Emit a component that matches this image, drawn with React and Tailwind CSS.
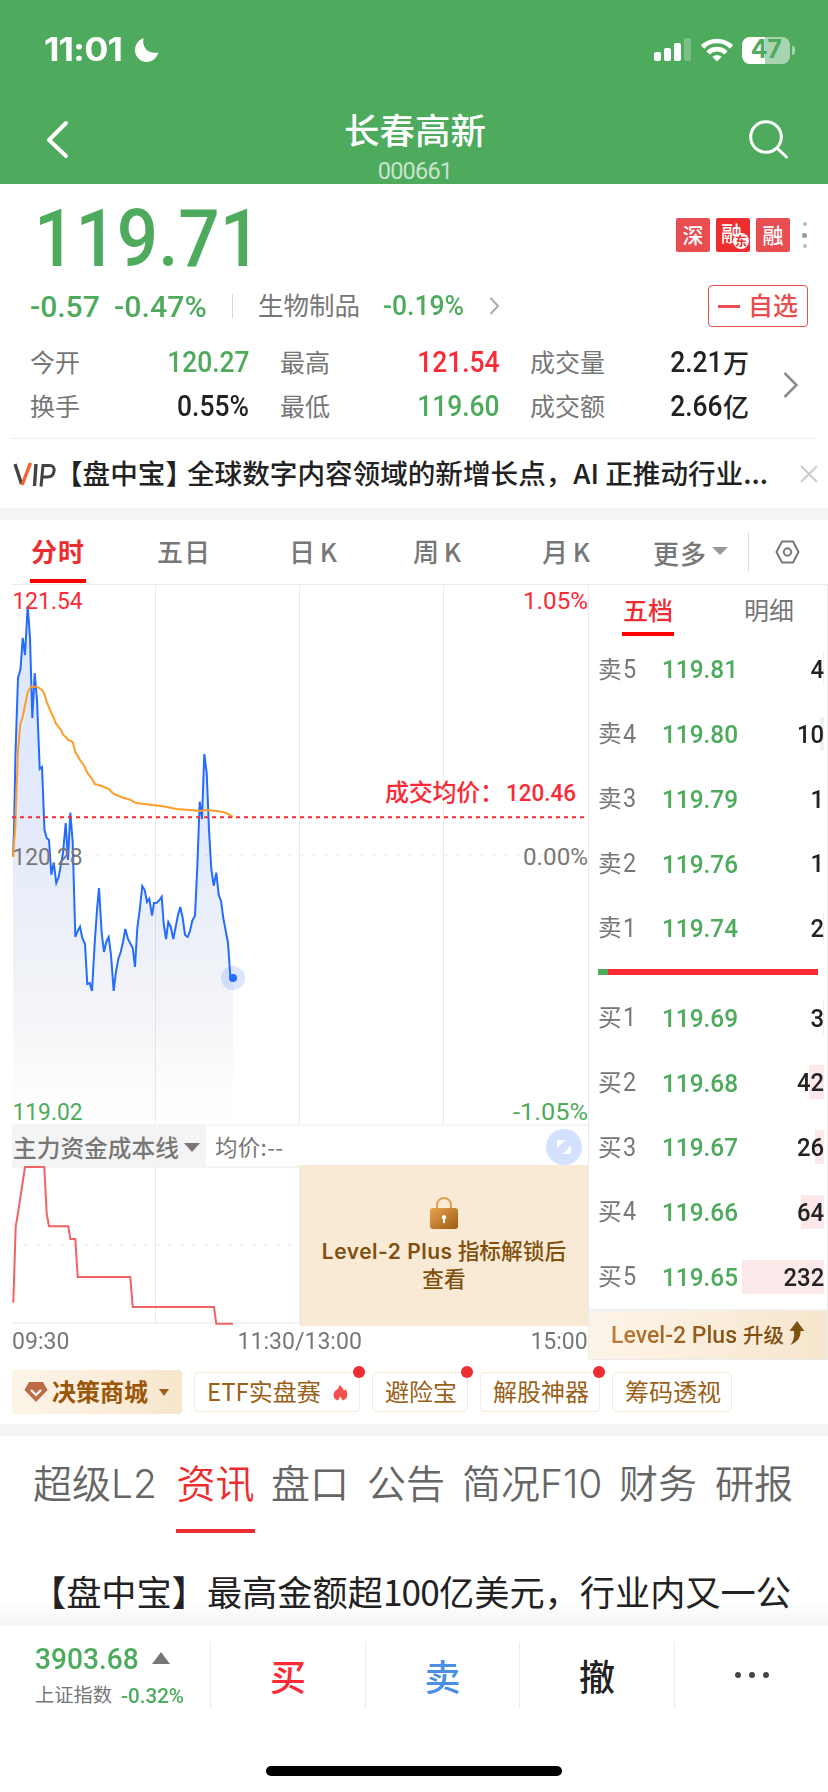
import React from 'react';

const PRICE_POINTS =
  '13,857 14,830 15.5,753 18,678 20.5,669 22.7,638 25,655 27.7,606 30,638 32.3,718 34.7,673 37,700 39.7,769 42,767 44.5,830 46.7,838 49,840 51.3,874.7 53.7,862.7 56.3,883 58.7,877 63,853 65.7,823 68,860 70.3,812.7 72.7,842 75.3,937 77.7,931 80,926.7 82.3,938 85,944 87.3,984 89.7,983 92,991 94.7,943 97,910 99,888 101.7,933 104,952 106.3,941.7 108.7,937 111,955 113.7,991 116,971.7 118.3,959 120.7,952 123,942 125.3,929 128,939 132.7,948 135,967 137.3,928 139.7,910 142.3,886 144.7,890 147,902 149.3,898.7 152,915.7 154,903 156.7,902.7 159,900.7 161.7,896.7 163.7,924 166,939 168.3,922 170.7,926.7 173.3,939 175.7,926.7 178,915 180.3,907 182.7,918 185,935 187.7,937 190,931 192.3,920.7 195,915.7 197.3,866.7 199.7,801.7 202,819 204.3,754 206.7,773 209,830 211.3,869 213.7,885.7 216.3,872.7 218.7,895 221,900.7 223.3,918 228,943 230.3,976 233,978';

const AVG_POINTS =
  '13,857 15.3,827 18,750 20.3,724 22.7,717 27.7,692 30.7,686.7 37,686.7 41.7,689.7 44,692.7 46.7,701.7 51.3,713 53.7,717.7 56,723.7 61,730 63.3,735 65.7,737 68.3,740 72.7,742 75.3,752 80,760 84.3,766 87.3,772.7 92,779 94.7,784 101.7,786 108.7,789 113.7,794 123,797.7 130.3,799.7 136,803 161.3,806 166.7,807 176.7,809 190,810 199.7,811 206.7,810 216,811 223,812 228,814 233,817';

const COST_POINTS =
  '13.3,1302.7 15.7,1226.7 18,1213 25,1167 44.3,1167 46.7,1214 49,1226.3 68.3,1226.3 70.3,1239 75.3,1239 77.7,1277 130.3,1277 132.7,1307 214,1307 216.3,1323.7 233,1323.7';

const sells = [
  { label: '卖5', price: '119.81', vol: 4, bar: 1 },
  { label: '卖4', price: '119.80', vol: 10, bar: 4 },
  { label: '卖3', price: '119.79', vol: 1, bar: 0 },
  { label: '卖2', price: '119.76', vol: 1, bar: 0 },
  { label: '卖1', price: '119.74', vol: 2, bar: 1 },
];

const buys = [
  { label: '买1', price: '119.69', vol: 3, bar: 1 },
  { label: '买2', price: '119.68', vol: 42, bar: 15 },
  { label: '买3', price: '119.67', vol: 26, bar: 9 },
  { label: '买4', price: '119.66', vol: 64, bar: 23 },
  { label: '买5', price: '119.65', vol: 232, bar: 82 },
];

const StatusBar = () => (
  <div className="h-[100px] flex items-center justify-between pl-[44px] pr-[33px]">
    <div className="flex items-center gap-2">
      <span className="w-[82px] text-[32px] leading-none font-bold tracking-[-0.8px] font-['Inter','Liberation_Sans',sans-serif]">
        <span className="inline-block origin-left scale-x-[1.12]">11:01</span>
      </span>
      <svg width="26" height="26" viewBox="0 0 26 26" fill="#fff">
        <path d="M9.5 1.2C8 9 12.500 17.500 24.500 15.600C22.500 21.500 18 25 12.800 25C6.300 25 1 19.700 1 13.200C1 7.500 4.500 2.600 9.500 1.200Z" />
      </svg>
    </div>
    <div className="flex items-center">
      <svg width="38" height="24" viewBox="0 0 38 24" fill="#fff">
        <rect x="0" y="14" width="7" height="9" rx="2" />
        <rect x="10" y="10" width="7" height="13" rx="2" />
        <rect x="20" y="5" width="7" height="18" rx="2" />
        <rect x="30" y="0" width="7" height="23" rx="2" opacity=".25" />
      </svg>
      <svg className="ml-[8px]" width="34" height="24" viewBox="0 0 34 24" fill="none" stroke="#fff" strokeWidth="4.600">
        <path d="M2.500 9A20.500 20.500 0 0 1 31.500 9" />
        <path d="M8 14.800A12.800 12.800 0 0 1 26 14.800" />
        <path d="M12.300 18.800Q17 15.300 21.700 18.800L17 23.600Z" fill="#fff" stroke="none" />
      </svg>
      <div className="ml-[8px] w-[48px] h-[27px] rounded-[8px] bg-linear-to-r from-white from-48% to-[#a7d5af] to-48% flex items-center justify-center text-[25px] font-bold text-[#4eab5d] tracking-[-.5px] font-['Inter','Liberation_Sans',sans-serif]">
        47
      </div>
      <div className="ml-[2px] w-[3px] h-[9px] rounded-r-full bg-[#a7d5af]" />
    </div>
  </div>
);

const Header = () => (
  <header className="h-[184px] bg-[#4eab5d] text-white">
    <StatusBar />
    <div className="h-[84px] flex justify-between">
      <svg className="mt-[19px] ml-[45px]" width="26" height="42" viewBox="0 0 26 42" fill="none" stroke="#fff" strokeWidth="4" strokeLinecap="round" strokeLinejoin="round">
        <path d="M21 4L4 21L21 37" />
      </svg>
      <div className="flex flex-col items-center pl-[13px]">
        <div className="h-[61px] leading-[57px] text-[35.5px] font-medium">长春高新</div>
        <div className="h-[20px] leading-[20px] text-[23.500px] text-white/70 font-['Roboto'] tracking-[-.8px]">000661</div>
      </div>
      <svg className="mt-[17px] mr-[36px]" width="46" height="44" viewBox="0 0 46 44" fill="none" stroke="#fff" strokeWidth="3" strokeLinecap="round">
        <circle cx="20" cy="20" r="15.300" />
        <path d="M31.500 31.500L40.500 40" />
      </svg>
    </div>
  </header>
);

const Stat = ({ label, value, unit = '', color }) => (
  <div className="flex items-center justify-between h-[44px]">
    <span className="text-[25px] text-[#777] mt-[-3px]">{label}</span>
    <span className={'flex items-center text-[29px] font-medium ' + color}>
      <span className="font-['Roboto'] inline-block origin-right scale-x-[.91]">{value}</span>
      {unit && <span className="text-[26px] mt-[-3px]">{unit}</span>}
    </span>
  </div>
);

const Quote = () => (
  <section className="h-[254px]">
    <div className="h-[100px] flex justify-between">
      <div className="pl-[34px] pt-[5px] leading-[100px] text-[80px] font-medium text-[#4eab5d] font-['Roboto']">
        <span className="inline-block origin-left scale-x-[.91]">119.71</span>
      </div>
      <div className="flex gap-[6px] pt-[34px] pr-[21px] text-[21px] text-white text-center leading-[32px] font-medium">
        <div className="w-[34px] h-[34px] rounded-[2px] bg-[#e84e50]">深</div>
        <div className="w-[34px] h-[34px] rounded-[2px] bg-[#ed2d30] relative">
          <span className="absolute left-[5px] -top-[2px]">融</span>
          <span className="absolute right-[1px] bottom-[3px] size-[16px] rounded-full bg-white text-[#ed2d30] text-[12px] leading-[15px] font-bold">东</span>
        </div>
        <div className="w-[34px] h-[34px] rounded-[2px] bg-[#e84e50]">融</div>
        <div className="ml-[6px] mt-[4px] w-[5px] h-[26px] flex flex-col items-center justify-between">
          <i className="size-[4px] rounded-full bg-[#bbb]" />
          <i className="size-[5px] rounded-full bg-[#999]" />
          <i className="size-[4px] rounded-full bg-[#bbb]" />
        </div>
      </div>
    </div>
    <div className="h-[44px] flex items-center pl-[30px] pr-[20px] text-[#4eab5d]">
      <span className="w-[84px] text-[30px] font-medium font-['Roboto']"><span className="inline-block origin-left">-0.57</span></span>
      <span className="w-[118px] text-[30px] font-medium font-['Roboto']"><span className="inline-block origin-left scale-x-[1.01]">-0.47%</span></span>
      <span className="w-px h-[24px] bg-[#d8d8d8]" />
      <span className="ml-[25px] mt-[-3px] w-[125px] text-[25.500px] text-[#777]">生物制品</span>
      <span className="w-[106px] text-[27px] font-medium font-['Roboto']"><span className="inline-block origin-left scale-x-[.98]">-0.19%</span></span>
      <svg width="11" height="18" viewBox="0 0 11 18" fill="none" stroke="#aaa" strokeWidth="2"><path d="M1.500 1L9 9L1.500 17" /></svg>
      <div className="ml-auto w-[100px] h-[42px] border border-[#e84e50] rounded-[4px] flex items-center pl-[9px] text-[25px] text-[#e84e50] font-medium">
        <i className="w-[22px] h-[3px] bg-[#e84e50] mr-[8px]" />
        <span className="mt-[-2px]">自选</span>
      </div>
    </div>
    <div className="flex items-center pt-[13px]">
      <div className="w-[750px] pl-[30px] grid grid-cols-[219px_219px_219px] gap-x-[31px]">
        <Stat label="今开" value="120.27" color="text-[#4eab5d]" />
        <Stat label="最高" value="121.54" color="text-[#fa2a36]" />
        <Stat label="成交量" value="2.21" unit="万" color="text-[#222]" />
        <Stat label="换手" value="0.55%" color="text-[#222]" />
        <Stat label="最低" value="119.60" color="text-[#4eab5d]" />
        <Stat label="成交额" value="2.66" unit="亿" color="text-[#222]" />
      </div>
      <svg className="ml-[33px]" width="16" height="28" viewBox="0 0 16 28" fill="none" stroke="#8c8c8c" strokeWidth="2.500"><path d="M1.500 2L13.500 14L1.500 26" /></svg>
    </div>
  </section>
);

const VipNews = () => (
  <div className="mx-3 h-[70px] border-t-1 border-[#ececec] flex items-center">
    <svg className="mt-[2px]" width="45" height="26" viewBox="0 0 45 26" fill="none" strokeWidth="3.400">
      <path d="M3 2L9.500 22" stroke="#444" />
      <path d="M18.500 1L10 23" stroke="#f4602f" />
      <path d="M24 2L22.500 24" stroke="#444" />
      <path d="M29 24.500L31 3.500H38Q43 4 42 9.500Q41 15 35.500 15H30.500" stroke="#444" strokeWidth="3" />
    </svg>
    <div className="w-[720px] ml-[-2px] mt-[-2px] whitespace-nowrap text-[27.600px] font-medium text-[#222]">
      【盘中宝<span className="tracking-[-6px]">】</span>全球数字内容领域的新增长点，AI 正推动行业...
    </div>
    <svg className="ml-auto mr-[-3px]" width="20" height="20" viewBox="0 0 20 20" fill="none" stroke="#ccc" strokeWidth="2"><path d="M2 2L18 18M18 2L2 18" /></svg>
  </div>
);

const PeriodTabs = () => (
  <nav className="h-[64px] flex text-[26px] leading-[61px] tracking-[1px] [word-spacing:-3px] font-medium text-[#777] whitespace-nowrap">
    <div className="ml-[30px] w-[56px] pl-[1px] h-[63px] border-b-4 border-[#f00] text-[#ed2d30] font-bold">分时</div>
    <div className="ml-[71px] w-[132px]">五日</div>
    <div className="w-[124px]">日 K</div>
    <div className="w-[129px]">周 K</div>
    <div className="w-[111px]">月 K</div>
    <div className="flex items-center">
      更多
      <i className="ml-[5px] mt-[-3px] border-x-8 border-t-8 border-x-transparent border-t-[#999]" />
    </div>
    <i className="ml-[20px] mt-[12px] w-px h-[40px] bg-[#ddd]" />
    <svg className="ml-[26px] mt-[20px]" width="25" height="24" viewBox="0 0 25 24" fill="none" stroke="#777" strokeWidth="2">
      <path d="M7 1.500H18L23.500 12L18 22.500H7L1.500 12Z" strokeLinejoin="round" />
      <circle cx="12.500" cy="12" r="3.700" />
    </svg>
  </nav>
);

const MinuteChart = () => (
  <svg className="block ml-3 font-['Roboto']" width="576" height="542" viewBox="12 584 576 542" fontSize="24">
    <defs>
      <linearGradient id="area" x1="0" y1="0" x2="0" y2="1">
        <stop offset="0" stopColor="#2a6cff" stopOpacity=".16" />
        <stop offset=".45" stopColor="#2a60e0" stopOpacity=".13" />
        <stop offset=".8" stopColor="#506090" stopOpacity=".06" />
        <stop offset="1" stopColor="#888" stopOpacity="0" />
      </linearGradient>
    </defs>
    <path d="M12 584.500H588M155.500 584V1126M299.500 584V1126M443.500 584V1126" stroke="#ebebeb" />
    <path d="M12 855H588" stroke="#f4f4f4" strokeWidth="2" strokeDasharray="4 8" />
    <path d="M12 1125.500H588" stroke="#f2f2f2" strokeWidth="2" />
    <polygon points={PRICE_POINTS + ' 233,1126 13,1126'} fill="url(#area)" />
    <polyline points={PRICE_POINTS} fill="none" stroke="#246bff" strokeWidth="2" />
    <polyline points={AVG_POINTS} fill="none" stroke="#ff9d28" strokeWidth="2" />
    <path d="M12 817.300H585" stroke="#fa2a36" strokeWidth="2" strokeDasharray="4 4" />
    <circle cx="233" cy="978" r="12" fill="#246bff" fillOpacity=".16" />
    <circle cx="233" cy="978" r="4" fill="#246bff" />
    <g stroke="currentColor" strokeWidth="0">
      <text x="12.500" y="609" textLength="70" lengthAdjust="spacingAndGlyphs" fill="#fa2a36">121.54</text>
      <text x="12.500" y="864.500" textLength="70" lengthAdjust="spacingAndGlyphs" fill="#777">120.28</text>
      <text x="12.500" y="1120" textLength="70" lengthAdjust="spacingAndGlyphs" fill="#4eab5d">119.02</text>
      <text x="523" y="609" textLength="65" lengthAdjust="spacingAndGlyphs" fill="#fa2a36">1.05%</text>
      <text x="523" y="864.500" textLength="65" lengthAdjust="spacingAndGlyphs" fill="#777">0.00%</text>
      <text x="513" y="1120" textLength="75" lengthAdjust="spacingAndGlyphs" fill="#4eab5d">-1.05%</text>
    </g>
    <text x="385" y="801" textLength="119" fill="#fa2a36" className="font-['Noto_Sans_CJK_SC'] font-medium" fontSize="24">成交均价：</text>
    <text x="506" y="801" textLength="70" lengthAdjust="spacingAndGlyphs" fill="#fa2a36" className="font-medium">120.46</text>
  </svg>
);

const CostIndicator = () => (
  <div className="pl-3">
    <div className="h-[40px] flex items-center text-[#777]">
      <div className="w-[194px] h-[41px] bg-[#f4f4f4] flex items-center pl-[1px] text-[23.700px] font-medium whitespace-nowrap">
        <span className="mt-[3px]">主力资金成本线</span>
        <i className="ml-[5px] mt-[2px] border-x-8 border-t-9 border-x-transparent border-t-[#777]" />
      </div>
      <span className="ml-[9px] mt-[2px] text-[22.500px] tracking-[.3px]">均价:--</span>
      <div className="ml-auto mr-[6px] mt-[2px] size-[36px] rounded-full bg-[#d3e0fe] flex items-center justify-center">
        <svg width="14" height="14" viewBox="0 0 14 14" fill="#fff">
          <path d="M0 0H8.500L0 8.500Z" />
          <path d="M14 14H5.500L14 5.500Z" />
        </svg>
      </div>
    </div>
    <div className="h-[160px] flex">
      <svg width="288" height="160" viewBox="12 1166 288 160">
        <path d="M12 1167H300M12 1323H300" stroke="#f4f4f4" strokeWidth="2" />
        <path d="M155.500 1166V1324M299.500 1166V1324" stroke="#ebebeb" />
        <path d="M12 1245H300" stroke="#f4f4f4" strokeWidth="2" strokeDasharray="4 8" />
        <polyline points={COST_POINTS} fill="none" stroke="#f06464" strokeWidth="2" />
      </svg>
      <div className="w-[288px] h-[161px] mt-[-1px] bg-[#f8ead5] flex flex-col items-center pt-[31px] text-[21.700px] leading-[26px] font-medium text-[#80500f] whitespace-nowrap">
        <svg width="30" height="34" viewBox="0 0 30 34">
          <defs>
            <linearGradient id="lock" x1="0" y1="0" x2="1" y2="1">
              <stop offset="0" stopColor="#eaa550" />
              <stop offset="1" stopColor="#9c5a12" />
            </linearGradient>
          </defs>
          <path d="M8 13V9a7 7 0 0 1 14 0v4" fill="none" stroke="#dfa050" strokeWidth="2" />
          <rect x="1" y="12" width="28" height="21" rx="3" fill="url(#lock)" />
          <path d="M15 19a2.300 2.300 0 0 1 1 4.300V27h-2v-3.700a2.300 2.300 0 0 1 1-4.300z" fill="#fff" />
        </svg>
        <div className="mt-[7px]"><span className="font-['Inter'] font-semibold text-[21px] tracking-[.5px] mr-[5px]">Level-2 Plus</span>指标解锁后</div>
        <div>查看</div>
      </div>
    </div>
    <div className="h-[34px] pb-[4px] flex justify-between items-center text-[24px] text-[#777] font-['Roboto']">
      <span className="w-[180px]"><span className="inline-block origin-left scale-x-[.96]">09:30</span></span>
      <span className="inline-block scale-x-[.96]">11:30/13:00</span>
      <span className="w-[180px] text-right"><span className="inline-block origin-right scale-x-[.96]">15:00</span></span>
    </div>
  </div>
);

const DepthRow = ({ row, barColor }) => (
  <div className="h-[64.700px] flex items-center text-[#777]">
    <span className="w-[64px] flex items-center text-[23.500px]">
      <span className="mt-[-2px]">{row.label[0]}</span>
      <span className="text-[26px] ml-px font-['Roboto'] inline-block origin-left scale-x-[.9]">{row.label[1]}</span>
    </span>
    <span className="w-[80px] text-[26.500px] font-medium text-[#4eab5d] font-['Roboto']">
      <span className="inline-block origin-left scale-x-[.92]">{row.price}</span>
    </span>
    <span className="relative w-[82px] h-[34px] leading-[34px] text-right text-[26.500px] font-medium text-[#222] font-['Roboto']">
      <i className={'absolute right-0 top-0 h-full ' + barColor} style={{ width: row.bar }} />
      <span className="relative inline-block origin-right scale-x-[.9]">{row.vol}</span>
    </span>
  </div>
);

const Depth = () => (
  <aside className="w-[240px] h-[776px] border-x border-y border-[#ebebeb] flex flex-col">
    <div className="h-[51px] flex text-[25px] leading-[48px] text-[#777]">
      <div className="ml-[33px] w-[52px] border-b-4 border-[#f00] text-center text-[#ed2d30] font-medium">五档</div>
      <div className="ml-[70px]">明细</div>
    </div>
    <div className="pl-[9px] mt-[1px]">
      {sells.map((row) => <DepthRow key={row.label} row={row} barColor="bg-[#e9f5eb]" />)}
    </div>
    <div className="ml-[9px] mt-[9px] mb-[10px] w-[220px] h-[6px] bg-[#fa2a36]"><div className="w-[10px] h-full bg-[#4eab5d]" /></div>
    <div className="pl-[9px]">
      {buys.map((row) => <DepthRow key={row.label} row={row} barColor="bg-[#fde8e9]" />)}
    </div>
    <div className="mt-auto h-[50px] border-t-2 border-[#f0f0f2] bg-linear-to-r from-[#fdf4e9] to-[#f7e6cd] flex items-center pl-[22px] whitespace-nowrap font-medium">
      <span className="w-[132px] text-[24px] font-['Roboto']"><span className="inline-block origin-left scale-x-[.96] bg-linear-to-r from-[#c07a35] to-[#80500f] bg-clip-text text-transparent">Level-2 Plus</span></span>
      <span className="w-[46px] mt-[-2px] text-[20.500px] text-[#80500f]">升级</span>
      <svg className="mt-[-4px]" width="16" height="26" viewBox="0 0 16 26" fill="#80500f"><path d="M8 1L15.500 11H11.500Q12.500 20 1.500 25Q6 19 5 11H.500Z" /></svg>
    </div>
  </aside>
);

const Pill = ({ children, dot, className }) => (
  <div className={'relative h-[40px] rounded-[4px] border border-[#f8ead5] leading-[35px] pl-[12px] text-[24px] text-[#9b5f17] whitespace-nowrap ' + className}>
    {children}
    {dot && <i className="absolute -right-[6px] -top-[7px] size-[12px] rounded-full bg-[#ed2d30]" />}
  </div>
);

const ToolPills = () => (
  <div className="h-[64px] flex items-center pl-3 gap-3">
    <div className="w-[170px] h-[44px] rounded-[4px] bg-linear-to-r from-[#fdf4e9] to-[#f7e6cd] flex items-center pl-[12px] text-[24px] font-bold text-[#9b5708] whitespace-nowrap">
      <svg className="mr-[4px]" width="24" height="20" viewBox="0 0 24 20">
        <path d="M5 0H19L23.500 8L12 20L.500 8Z" fill="#bd6c46" />
        <path d="M7 8L12 13L17 8" fill="none" stroke="#fff" strokeWidth="2.200" />
      </svg>
      <span className="mt-[-3px]">决策商城</span>
      <i className="ml-[11px] border-x-5 border-t-7 border-x-transparent border-t-[#9b5f17]" />
    </div>
    <Pill className="w-[166px]" dot>
      ETF实盘赛
      <svg className="absolute right-[11px] top-[12px]" width="15" height="16" viewBox="0 0 15 16" fill="#f2504c">
        <path d="M6.500 0Q10.500 3 10.500 5.500Q12 5.500 12.500 4Q15 7.500 14 11.500Q13 14.500 10 15.500Q8 13 7 11.500Q6 14 5 15.500Q0 14 .500 9Q1 6 4 4.500Q6 3 6.500 0Z" />
      </svg>
    </Pill>
    <Pill className="w-[96px]" dot>避险宝</Pill>
    <Pill className="w-[120px]" dot>解股神器</Pill>
    <Pill className="w-[120px]">筹码透视</Pill>
  </div>
);

const InfoTabs = () => (
  <nav className="h-[97px] mb-[1px] flex text-[39px] leading-[90px] text-[#666] whitespace-nowrap font-[350]">
    <div className="ml-[33px] w-[143px]">超级<span className="font-['Inter'] font-light text-[39px]">L2</span></div>
    <div className="w-[79px] border-b-4 border-[#ed2d30] text-[#ed2d30] text-center">资讯</div>
    <div className="ml-[16px] w-[96px]">盘口</div>
    <div className="w-[95px]">公告</div>
    <div className="w-[157px]">简况<span className="font-['Inter'] font-light text-[39px]">F10</span></div>
    <div className="w-[96px]">财务</div>
    <div>研报</div>
  </nav>
);

const BottomBar = () => (
  <footer className="relative h-[166px] bg-white">
    <div className="absolute inset-x-0 -top-[26px] h-[26px] bg-linear-to-b from-transparent to-black/4" />
    <div className="pt-[16px] flex h-[82px] divide-x divide-[#ececec]">
      <div className="w-[211px] pl-[35px] pt-[1px]">
        <div className="h-[34px] flex items-center text-[29px] font-medium text-[#4eab5d] font-['Roboto']">
          <span className="w-[117px]"><span className="inline-block origin-left scale-x-[.97]">3903.68</span></span>
          <i className="mt-[-4px] border-x-9 border-b-12 border-x-transparent border-b-[#777]" />
        </div>
        <div className="h-[34px] flex items-center text-[19.300px] text-[#777]">
          <span className="w-[86px]">上证指数</span>
          <span className="mt-[3px] text-[20px] font-medium text-[#4eab5d] font-['Roboto'] inline-block origin-left scale-x-[1.03]">-0.32%</span>
        </div>
      </div>
      <div className="w-[155px] text-center text-[36px] leading-[66px] font-medium text-[#fa2a36]">买</div>
      <div className="w-[154px] text-center text-[36px] leading-[66px] font-medium text-[#4a90e2]">卖</div>
      <div className="w-[155px] text-center text-[36px] leading-[66px] font-medium text-[#222]">撤</div>
      <div className="flex-1 flex items-center justify-center gap-[8px]">
        <i className="size-[6px] rounded-full bg-[#444]" />
        <i className="size-[6px] rounded-full bg-[#444]" />
        <i className="size-[6px] rounded-full bg-[#444]" />
      </div>
    </div>
    <div className="mx-auto mt-[58px] w-[296px] h-[10px] rounded-full bg-black" />
  </footer>
);

const App = () => (
  <div className="w-[828px] h-[1792px] overflow-hidden bg-white font-['Noto_Sans_CJK_SC',sans-serif]">
    <Header />
    <Quote />
    <VipNews />
    <div className="h-3 bg-[#f4f4f4]" />
    <PeriodTabs />
    <div className="flex h-[776px]">
      <div className="w-[588px]">
        <MinuteChart />
        <CostIndicator />
      </div>
      <Depth />
    </div>
    <ToolPills />
    <div className="h-3 bg-[#f4f4f4]" />
    <InfoTabs />
    <div className="h-[92px] pl-[31px] leading-[113px] text-[35.200px] text-[#222] whitespace-nowrap overflow-hidden">
      【盘中宝】最高金额超<span className="tracking-[-.8px]">100</span>亿美元，行业内又一公
    </div>
    <BottomBar />
  </div>
);

export default App;
